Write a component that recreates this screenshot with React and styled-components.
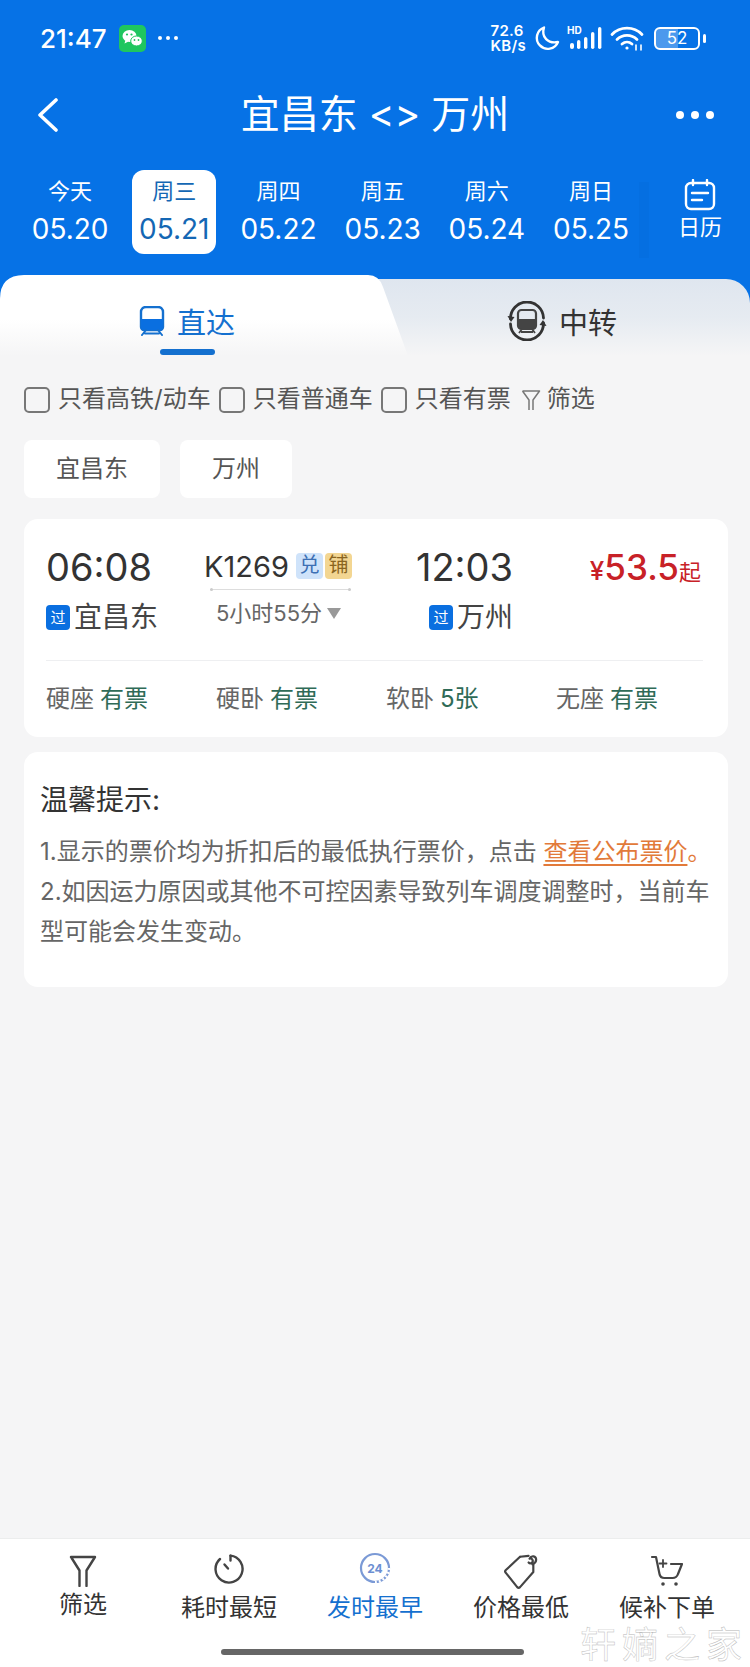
import styled, { createGlobalStyle } from 'styled-components'

const GlobalStyle = createGlobalStyle`
  * { box-sizing: border-box; }
  html, body { margin: 0; padding: 0; }
  body {
    background: #f5f5f6;
    font-family: Inter, "Noto Sans CJK SC", sans-serif;
    color: #333;
  }
`

const dates = [
  { week: '今天', date: '05.20' },
  { week: '周三', date: '05.21', active: true },
  { week: '周四', date: '05.22' },
  { week: '周五', date: '05.23' },
  { week: '周六', date: '05.24' },
  { week: '周日', date: '05.25' },
]

const seats = [
  { name: '硬座', left: '有票' },
  { name: '硬卧', left: '有票' },
  { name: '软卧', left: '5张' },
  { name: '无座', left: '有票' },
]

const filters = ['只看高铁/动车', '只看普通车', '只看有票']

const WechatIcon = () => (
  <svg width="27" height="27" viewBox="0 0 27 27">
    <rect width="27" height="27" rx="5" fill="#1fc65f" />
    <ellipse cx="10.5" cy="11" rx="7" ry="6" fill="#fff" />
    <path d="M6.5 15l-1 3.5 4-2z" fill="#fff" />
    <ellipse cx="17.5" cy="16" rx="5.8" ry="5" fill="#fff" stroke="#1fc65f" strokeWidth="1" />
    <circle cx="8" cy="9.500" r="1.100" fill="#1fc65f" />
    <circle cx="12.500" cy="9.500" r="1.100" fill="#1fc65f" />
    <circle cx="15.500" cy="15" r="0.900" fill="#1fc65f" />
    <circle cx="19.500" cy="15" r="0.900" fill="#1fc65f" />
  </svg>
)

const MoonIcon = () => (
  <svg width="27" height="27" viewBox="0 0 27 27" fill="none">
    <path d="M11 2.500a11 11 0 1 0 14 14.500C15 19 8 12 11 2.500z" stroke="#fff" strokeWidth="2.400" strokeLinejoin="round" />
  </svg>
)

const SignalIcon = () => (
  <svg width="36" height="26" viewBox="0 0 36 26">
    <text x="0" y="9" fontSize="10" fontWeight="700" fontFamily="Inter, sans-serif" fill="#fff">HD</text>
    <rect x="3" y="18" width="4" height="6" rx="2" fill="#fff" />
    <rect x="10" y="15" width="3.400" height="9" rx="1.700" fill="#fff" />
    <rect x="17" y="12" width="3.400" height="12" rx="1.700" fill="#fff" />
    <rect x="24" y="7" width="3.400" height="17" rx="1.700" fill="#fff" />
    <rect x="31" y="2" width="3.400" height="22" rx="1.700" fill="#fff" />
  </svg>
)

const WifiIcon = () => (
  <svg width="34" height="26" viewBox="0 0 34 26" fill="none" stroke="#fff" strokeWidth="2.800" strokeLinecap="round">
    <path d="M2 9.500C10 1 24 1 32 9.500" />
    <path d="M7 14.500c5.500-5.500 14.500-5.500 20 0" />
    <path d="M12 19c3-2.600 7-2.600 10 0" />
    <circle cx="17" cy="23" r="1.600" fill="#fff" stroke="none" />
    <path d="M26 20v5M31 20v5" strokeWidth="1.600" />
  </svg>
)

const BackIcon = () => (
  <svg width="24" height="34" viewBox="0 0 24 34" fill="none">
    <path d="M20 2L4 17l16 15" stroke="#fff" strokeWidth="3.600" strokeLinecap="round" strokeLinejoin="round" />
  </svg>
)

const CalendarIcon = () => (
  <svg width="32" height="32" viewBox="0 0 32 32" fill="none" stroke="#fff" strokeWidth="2.400" strokeLinecap="round">
    <rect x="2" y="4" width="28" height="26" rx="5" />
    <path d="M9 1v5M23 1v5M8 14h16M8 21h10" />
  </svg>
)

const DirectIcon = () => (
  <svg width="26" height="30" viewBox="0 0 26 30" fill="none">
    <path d="M2 6a5 5 0 0 1 5-5h12a5 5 0 0 1 5 5v15a3 3 0 0 1-3 3H5a3 3 0 0 1-3-3z" stroke="#1470cf" strokeWidth="2.400" />
    <path d="M2 13h22v8a3 3 0 0 1-3 3H5a3 3 0 0 1-3-3z" fill="#0a6fe0" />
    <path d="M7 24l-4 5M19 24l4 5M6 27.500h14" stroke="#1470cf" strokeWidth="2" strokeLinecap="round" />
  </svg>
)

const TransferIcon = () => (
  <svg width="40" height="40" viewBox="0 0 40 40" fill="none">
    <path d="M3.500 18A16.500 16.500 0 0 1 36.500 17" stroke="#333" strokeWidth="2.800" strokeLinecap="round" />
    <path d="M36.500 22A16.500 16.500 0 0 1 3.500 23" stroke="#333" strokeWidth="2.800" strokeLinecap="round" />
    <path d="M0.500 15l3.500 6 3.500-5z" fill="#333" />
    <path d="M39.500 25l-3.500-6-3.500 5z" fill="#333" />
    <rect x="11" y="9" width="18" height="19" rx="3.500" stroke="#444" strokeWidth="2.200" />
    <path d="M11 18h18v7a3 3 0 0 1-3 3H14a3 3 0 0 1-3-3z" fill="#444" />
    <path d="M15 28l-3 4M25 28l3 4M14 31h12" stroke="#444" strokeWidth="1.800" />
  </svg>
)

const SmallFunnel = () => (
  <svg width="20" height="23" viewBox="0 0 20 23" fill="none" stroke="#777" strokeWidth="1.500" strokeLinejoin="round">
    <path d="M1.500 2h17l-6.500 9v10M8 21V11L1.500 2" />
  </svg>
)

const FunnelIcon = () => (
  <svg width="28" height="32" viewBox="0 0 28 32" fill="none" stroke="#444" strokeWidth="2.400" strokeLinecap="round" strokeLinejoin="round">
    <path d="M2 2h24l-8.500 13.500V31M10.500 31V15.500L2 2" />
  </svg>
)

const ClockIcon = () => (
  <svg width="32" height="38" viewBox="0 0 32 38" fill="none" stroke="#444" strokeWidth="2.400" strokeLinecap="round">
    <path d="M17.500 3.600A13.500 13.500 0 1 1 7 7" />
    <path d="M17.500 3.600v5M11.500 12.500l3.500 4" />
  </svg>
)

const EarlyIcon = () => (
  <svg width="34" height="38" viewBox="0 0 34 38" fill="none">
    <circle cx="17" cy="16" r="14" stroke="#7b9ad6" strokeWidth="2.200" />
    <path d="M31 16a14 14 0 0 1-14 14" stroke="#fff" strokeWidth="2.400" strokeDasharray="2 2" />
    <text x="17" y="20.500" textAnchor="middle" fontSize="12" fontWeight="700" fontFamily="Inter, sans-serif" fill="#6c8fd2">24</text>
  </svg>
)

const TagIcon = () => (
  <svg width="36" height="38" viewBox="0 0 38 40" fill="none" stroke="#444" strokeWidth="2.300" strokeLinecap="round" strokeLinejoin="round">
    <path d="M18 5L3 19q-1.500 1.500 0 3L15 37q1.500 1.500 3 0L32 21V13" />
    <path d="M18 5l9-1" />
    <path d="M27 11a2.500 2.500 0 1 0 1-4c2-4 7-3 7 1 0 2-2 4-4 5" />
  </svg>
)

const CartIcon = () => (
  <svg width="34" height="38" viewBox="0 -2 34 38" fill="none" stroke="#444" strokeWidth="2.200" strokeLinecap="round" strokeLinejoin="round">
    <path d="M2 3h4l3.500 17c.5 3 2 4 5 4h8c3 0 4.500-1 5.500-4L32 10H21" />
    <path d="M13 6v7M9.500 9.500h7" strokeWidth="1.800" />
    <circle cx="13" cy="30" r="1.800" fill="#444" stroke="none" />
    <circle cx="26" cy="30" r="1.800" fill="#444" stroke="none" />
  </svg>
)

const actions = [
  { label: '筛选', icon: <FunnelIcon />, raised: true },
  { label: '耗时最短', icon: <ClockIcon /> },
  { label: '发时最早', icon: <EarlyIcon />, active: true },
  { label: '价格最低', icon: <TagIcon /> },
  { label: '候补下单', icon: <CartIcon /> },
]

export default function App() {
  return (
    <Page>
      <GlobalStyle />
      <Header>
        <StatusBar>
          <StatusLeft>
            <Clock>21:47</Clock>
            <WechatIcon />
            <MoreSmall>
              <i />
              <i />
              <i />
            </MoreSmall>
          </StatusLeft>
          <StatusRight>
            <Speed>
              72.6
              <br />
              KB/s
            </Speed>
            <MoonIcon />
            <SignalIcon />
            <WifiIcon />
            <Battery>
              <BatteryBody>52</BatteryBody>
              <BatteryTip />
            </Battery>
          </StatusRight>
        </StatusBar>

        <NavBar>
          <BackIcon />
          <Title>宜昌东 &lt;&gt; 万州</Title>
          <NavMore>
            <i />
            <i />
            <i />
          </NavMore>
        </NavBar>

        <DateRow>
          {dates.map((d) => (
            <DateItem key={d.date}>
              <DateBox $active={d.active}>
                <Week>{d.week}</Week>
                <DateText>{d.date}</DateText>
              </DateBox>
            </DateItem>
          ))}
          <CalendarBtn>
            <CalendarIcon />
            <CalendarLabel>日历</CalendarLabel>
          </CalendarBtn>
        </DateRow>
      </Header>

      <TabBar>
        <TabInner>
          <ActiveTab>
            <TabLabel $active>
              <DirectIcon />
              直达
            </TabLabel>
            <TabLine />
          </ActiveTab>
          <OtherTab>
            <TabLabel>
              <TransferIcon />
              中转
            </TabLabel>
          </OtherTab>
        </TabInner>
      </TabBar>

      <FilterRow>
        {filters.map((f) => (
          <FilterItem key={f}>
            <CheckBox />
            <FilterText>{f}</FilterText>
          </FilterItem>
        ))}
        <FilterLink>
          <SmallFunnel />
          <FilterText>筛选</FilterText>
        </FilterLink>
      </FilterRow>

      <ChipRow>
        <Chip>宜昌东</Chip>
        <Chip>万州</Chip>
      </ChipRow>

      <TrainCard>
        <TrainMain>
          <DepartCol>
            <TimeText>06:08</TimeText>
            <Station>
              <PassBadge>过</PassBadge>
              宜昌东
            </Station>
          </DepartCol>
          <TrainCol>
            <TrainNoRow>
              <TrainNo>K1269</TrainNo>
              <TrainBadge $bg="#cfe3fa" $color="#3d70b4">兑</TrainBadge>
              <TrainBadge $bg="#f3d692" $color="#8a6420">铺</TrainBadge>
            </TrainNoRow>
            <RouteLine />
            <Duration>
              5小时55分
              <DurationArrow />
            </Duration>
          </TrainCol>
          <ArriveCol>
            <TimeText>12:03</TimeText>
            <Station>
              <PassBadge>过</PassBadge>
              万州
            </Station>
          </ArriveCol>
          <Price>
            <PriceUnit>¥</PriceUnit>
            53.5
            <small>起</small>
          </Price>
        </TrainMain>
        <SeatRow>
          {seats.map((s) => (
            <Seat key={s.name}>
              {s.name}
              <SeatLeft>{s.left}</SeatLeft>
            </Seat>
          ))}
        </SeatRow>
      </TrainCard>

      <TipCard>
        <TipTitle>温馨提示:</TipTitle>
        <TipBody>
          1.显示的票价均为折扣后的最低执行票价，点击 <TipLink>查看公布票价</TipLink>
          <TipMark>。</TipMark>
          <br />
          2.如因运力原因或其他不可控因素导致列车调度调整时，当前车型可能会发生变动。
        </TipBody>
      </TipCard>

      <BottomBar>
        <ActionRow>
          {actions.map((a) => (
            <ActionItem key={a.label}>
              <ActionIcon>{a.icon}</ActionIcon>
              <ActionLabel $active={a.active} $raised={a.raised}>
                {a.label}
              </ActionLabel>
            </ActionItem>
          ))}
        </ActionRow>
        <HomeBar />
        <Watermark>轩嫡之家</Watermark>
      </BottomBar>
    </Page>
  )
}

const Page = styled.div`
  width: 750px;
  min-height: 1667px;
  display: flex;
  flex-direction: column;
  overflow: hidden;
  background: #f5f5f6;
`

const Header = styled.header`
  background: #0672e6;
  color: #fff;
  padding-bottom: 21px;
`

const StatusBar = styled.div`
  height: 76px;
  padding: 0 44px 0 40px;
  display: flex;
  align-items: center;
  justify-content: space-between;
`

const StatusLeft = styled.div`
  display: flex;
  align-items: center;
`

const Clock = styled.span`
  font-size: 26px;
  font-weight: 500;
  width: 79px;
`

const MoreSmall = styled.span`
  display: flex;
  gap: 4px;
  margin-left: 12px;

  i {
    width: 4px;
    height: 4px;
    border-radius: 50%;
    background: #fff;
  }
`

const StatusRight = styled.div`
  display: flex;
  align-items: center;
  gap: 7px;
`

const Speed = styled.span`
  font-size: 15px;
  line-height: 15px;
  letter-spacing: 0.3px;
  font-weight: 600;
  white-space: nowrap;
`

const Battery = styled.span`
  display: flex;
  align-items: center;
  gap: 3px;
  margin-left: 3px;
`

const BatteryBody = styled.span`
  width: 46px;
  height: 23px;
  border: 2px solid #fff;
  border-radius: 6px;
  font-size: 17px;
  line-height: 19px;
  text-align: center;
  background: linear-gradient(90deg, rgba(255, 255, 255, 0.28) 52%, transparent 52%);
`

const BatteryTip = styled.i`
  width: 3px;
  height: 9px;
  border-radius: 2px;
  background: #fff;
`

const NavBar = styled.div`
  height: 78px;
  padding: 0 36px;
  display: grid;
  grid-template-columns: 1fr auto 1fr;
  align-items: center;
`

const Title = styled.h1`
  margin: 0;
  padding-bottom: 8px;
  font-size: 39px;
  font-weight: 400;
`

const NavMore = styled.span`
  display: flex;
  justify-content: flex-end;
  gap: 7px;

  i {
    width: 8px;
    height: 8px;
    border-radius: 50%;
    background: #fff;
  }
`

const DateRow = styled.div`
  margin-top: 16px;
  padding-left: 18px;
  display: flex;
  height: 84px;
`

const DateItem = styled.div`
  flex: none;
  width: 104.2px;
  display: flex;
  justify-content: center;
`

const DateBox = styled.div`
  width: 84px;
  height: 84px;
  border-radius: 12px;
  display: flex;
  flex-direction: column;
  align-items: center;
  background: ${({ $active }) => ($active ? '#fff' : 'transparent')};
  color: ${({ $active }) => ($active ? '#1467b4' : '#fff')};
`

const Week = styled.span`
  margin-top: 7px;
  font-size: 22px;
  line-height: 28px;
`

const DateText = styled.span`
  margin-top: 7px;
  font-size: 28px;
  line-height: 34px;
  white-space: nowrap;
`

const CalendarBtn = styled.div`
  position: relative;
  flex: none;
  width: 100px;
  margin-left: 7px;
  display: flex;
  flex-direction: column;
  align-items: center;
  padding-top: 9px;

  &::before {
    content: '';
    position: absolute;
    left: -11px;
    top: 12px;
    width: 10px;
    height: 76px;
    background: rgba(0, 60, 140, 0.05);
  }
`

const CalendarLabel = styled.span`
  font-size: 22px;
  line-height: 28px;
  margin-top: 2px;
`

const TabBar = styled.div`
  background: #0672e6;
  padding-top: 4px;
`

const TabInner = styled.div`
  height: 77px;
  border-radius: 24px 24px 0 0;
  background: linear-gradient(#dfe6ef, #e6ebf1 50%, #f5f5f6);
  display: grid;
  grid-template-columns: 408px 1fr;
`

const ActiveTab = styled.div`
  height: 81px;
  margin-top: -4px;
  padding: 26px 34px 0 0;
  display: flex;
  flex-direction: column;
  align-items: center;
  background: linear-gradient(#fff 55%, #f5f5f6);
  clip-path: path('M0 81 L0 24 Q0 0 24 0 L368 0 Q379 0 383 12 L408 81 Z');
`

const OtherTab = styled.div`
  padding: 22px 34px 0 0;
  display: flex;
  justify-content: center;
`

const TabLabel = styled.div`
  height: 40px;
  display: flex;
  align-items: center;
  gap: 12px;
  font-size: 29px;
  color: ${({ $active }) => ($active ? '#1470cf' : '#333')};
`

const TabLine = styled.i`
  width: 55px;
  height: 6px;
  margin-top: 8px;
  border-radius: 3px;
  background: #1470cf;
`

const FilterRow = styled.div`
  margin-top: 31px;
  padding-left: 24px;
  height: 26px;
  display: flex;
  align-items: center;
  gap: 8px;
`

const FilterItem = styled.label`
  display: flex;
  align-items: center;
  gap: 8px;
  white-space: nowrap;
`

const FilterText = styled.span`
  font-size: 24px;
  line-height: 30px;
  margin-top: -2px;
  color: #555;
`

const CheckBox = styled.span`
  width: 26px;
  height: 26px;
  border: 2px solid #777;
  border-radius: 5px;
`

const FilterLink = styled.span`
  margin-left: 2px;
  display: flex;
  align-items: center;
  gap: 6px;
`

const ChipRow = styled.div`
  margin-top: 27px;
  padding-left: 24px;
  display: flex;
  gap: 20px;
`

const Chip = styled.span`
  height: 58px;
  padding: 0 32px 5px;
  border-radius: 8px;
  background: #fff;
  display: flex;
  align-items: center;
  font-size: 24px;
  color: #555;
`

const TrainCard = styled.section`
  margin: 21px 22px 0 24px;
  height: 218px;
  border-radius: 14px;
  background: #fff;
`

const TrainMain = styled.div`
  height: 141px;
  padding: 23px 27px 0 22px;
  display: flex;
`

const DepartCol = styled.div`
  width: 158px;
`

const TimeText = styled.div`
  font-size: 38px;
  line-height: 50px;
  color: #333;
`

const Station = styled.div`
  margin-top: 7px;
  display: flex;
  align-items: center;
  gap: 4px;
  font-size: 28px;
  line-height: 36px;
  color: #444;
`

const PassBadge = styled.span`
  width: 24px;
  height: 25px;
  border-radius: 4px;
  background: #0a6fe0;
  color: #fff;
  font-size: 15px;
  line-height: 25px;
  text-align: center;
`

const TrainCol = styled.div`
  width: 148px;
  padding-top: 9px;
`

const TrainNoRow = styled.div`
  display: flex;
  align-items: center;
  height: 30px;
  gap: 2px;
`

const TrainNo = styled.span`
  font-size: 29px;
  color: #333;
  margin-right: 5px;
`

const TrainBadge = styled.span`
  width: 27px;
  height: 26px;
  border-radius: 4px;
  background: ${({ $bg }) => $bg};
  color: ${({ $color }) => $color};
  font-size: 20px;
  line-height: 25px;
  text-align: center;
`

const RouteLine = styled.div`
  position: relative;
  width: 141px;
  height: 1px;
  margin: 8px 0 0 6px;
  background: #ddd;

  &::before,
  &::after {
    content: '';
    position: absolute;
    top: -1px;
    width: 3px;
    height: 3px;
    border-radius: 50%;
    background: #ccc;
  }

  &::before {
    left: 0;
  }

  &::after {
    right: 0;
  }
`

const Duration = styled.div`
  margin-top: 11px;
  padding-left: 12px;
  display: flex;
  align-items: center;
  gap: 5px;
  font-size: 22px;
  line-height: 24px;
  color: #666;
`

const DurationArrow = styled.i`
  width: 0;
  height: 0;
  border-left: 7px solid transparent;
  border-right: 7px solid transparent;
  border-top: 11px solid #999;
`

const ArriveCol = styled.div`
  width: 105px;
  margin-left: 56px;
  display: flex;
  flex-direction: column;
  align-items: flex-end;
`

const Price = styled.div`
  flex: 1;
  text-align: right;
  font-size: 35px;
  line-height: 50px;
  font-weight: 500;
  color: #c82127;
  white-space: nowrap;

  small {
    font-size: 22px;
    font-weight: 400;
  }
`

const PriceUnit = styled.span`
  font-size: 26px;
  font-weight: 500;
`

const SeatRow = styled.div`
  margin: 0 25px 0 22px;
  height: 77px;
  padding-bottom: 6px;
  border-top: 1px solid #eeeff1;
  display: grid;
  grid-template-columns: repeat(4, 170px);
  align-items: center;
`

const Seat = styled.div`
  font-size: 24px;
  color: #666;
`

const SeatLeft = styled.span`
  margin-left: 6px;
  color: #2f6b57;
`

const TipCard = styled.section`
  margin: 15px 22px 0 24px;
  height: 235px;
  padding: 30px 16px 0;
  border-radius: 14px;
  background: #fff;
`

const TipTitle = styled.h2`
  margin: 0;
  font-size: 28px;
  line-height: 36px;
  font-weight: 400;
  color: #333;
`

const TipBody = styled.p`
  margin: 14px 0 0;
  font-size: 24px;
  line-height: 40px;
  color: #666;
`

const TipLink = styled.span`
  color: #e27a3a;
  text-decoration: underline;
  text-underline-offset: 4px;
`

const TipMark = styled.span`
  color: #e27a3a;
`

const BottomBar = styled.footer`
  position: relative;
  margin-top: auto;
  height: 129px;
  padding-top: 13px;
  background: #fff;
  border-top: 1px solid #eceded;
`

const ActionRow = styled.div`
  padding: 0 10px;
  display: grid;
  grid-template-columns: repeat(5, 146px);
`

const ActionItem = styled.div`
  display: flex;
  flex-direction: column;
  align-items: center;
`

const ActionIcon = styled.div`
  height: 38px;
  display: flex;
  align-items: center;
  justify-content: center;
`

const ActionLabel = styled.span`
  margin-top: ${({ $raised }) => ($raised ? '0' : '3px')};
  font-size: 24px;
  line-height: 30px;
  color: ${({ $active }) => ($active ? '#1470cf' : '#333')};
`

const HomeBar = styled.div`
  width: 303px;
  height: 6px;
  margin: 26px 0 0 221px;
  border-radius: 3px;
  background: #666;
`

const Watermark = styled.span`
  position: absolute;
  right: 2px;
  bottom: 2px;
  font-size: 36px;
  line-height: 40px;
  letter-spacing: 6px;
  color: #fff;
  -webkit-text-stroke: 0.4px #b5b5b5;
`
